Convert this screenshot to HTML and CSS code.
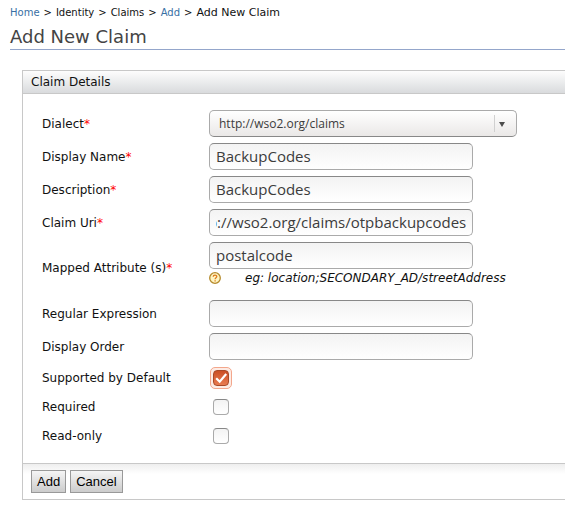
FILE: index.html
```html
<!DOCTYPE html>
<html lang="en">
<head>
<meta charset="utf-8">
<title>Add New Claim</title>
<link rel="stylesheet" href="styles.css">
</head>
<body>
<nav class="breadcrumb"><a href="#">Home</a><span>&gt;</span><span>Identity</span><span>&gt;</span><span>Claims</span><span>&gt;</span><a href="#">Add</a><span>&gt;</span><span class="current">Add New Claim</span></nav>
<h1 class="title">Add New Claim</h1>
<form class="panel">
  <h2 class="panel-head">Claim Details</h2>
  <div class="fields">
    <div class="row"><label for="dialect">Dialect<span class="req">*</span></label>
      <div class="select-wrap"><select id="dialect"><option>http://wso2.org/claims</option></select></div></div>
    <div class="row"><label for="name">Display Name<span class="req">*</span></label>
      <input class="text" type="text" id="name" value="BackupCodes"></div>
    <div class="row"><label for="desc">Description<span class="req">*</span></label>
      <input class="text" type="text" id="desc" value="BackupCodes"></div>
    <div class="row"><label for="uri">Claim Uri<span class="req">*</span></label>
      <input class="text" type="text" id="uri" value="http://wso2.org/claims/otpbackupcodes"></div>
    <div class="row"><label for="attr">Mapped Attribute (s)<span class="req">*</span></label>
      <div class="stack">
        <input class="text" type="text" id="attr" value="postalcode">
        <div class="hint">
          <svg class="help" viewBox="0 0 12 12" aria-hidden="true"><circle cx="6" cy="6" r="5.3" fill="#fff6c4" stroke="#b58a2c" stroke-width="1.3"/><path d="M4.2 4.8C4.2 2.6 7.8 2.6 7.8 4.6C7.8 5.8 6.1 5.8 6.1 7.3M6.1 8.2V9.5" fill="none" stroke="#df7b1c" stroke-width="1.3"/></svg>
          <em>eg: location;SECONDARY_AD/streetAddress</em>
        </div>
      </div></div>
    <div class="row"><label for="regex">Regular Expression</label>
      <input class="text" type="text" id="regex"></div>
    <div class="row"><label for="order">Display Order</label>
      <input class="text" type="text" id="order"></div>
    <div class="row check-row"><label for="supported">Supported by Default</label>
      <span class="check focused"><input type="checkbox" id="supported" checked><svg class="tick" viewBox="0 0 16 16" aria-hidden="true"><path d="M3.2 8.2L6.7 11.7L13.2 4" fill="none" stroke="#fff" stroke-width="2.2"/></svg></span></div>
    <div class="row check-row"><label for="required">Required</label>
      <span class="check"><input type="checkbox" id="required"></span></div>
    <div class="row check-row"><label for="readonly">Read-only</label>
      <span class="check"><input type="checkbox" id="readonly"></span></div>
  </div>
  <div class="actions"><button type="button">Add</button><button type="button">Cancel</button></div>
</form>
<script src="script.js"></script>
</body>
</html>
```
FILE: styles.css
```css
* { box-sizing: border-box; }

body {
  margin: 0;
  padding: 5px 0 12px 10px;
  background: #fff;
  color: #111;
  font: 12px/16px "DejaVu Sans", sans-serif;
}

.breadcrumb { display: flex; gap: 4px; font-size: 10px; line-height: 16px; }
.breadcrumb a { color: #386fa4; text-decoration: none; }
.current { font-size: 11px; }

.title {
  margin: 0 0 20px;
  padding: 4px 0 1px;
  border-bottom: 1px solid #94a6cb;
  color: #444;
  font-size: 18px;
  line-height: 23px;
  font-weight: normal;
}

.panel {
  margin-left: 12px;
  border: 1px solid #c8c8c8;
  border-right: 0;
}

.panel-head {
  margin: 0;
  padding: 0 8px;
  border-bottom: 1px solid #c8c8c8;
  background: linear-gradient(#fdfdfd, #d9dbdd);
  font-size: 12px;
  line-height: 22px;
  font-weight: normal;
}

.fields { padding: 13px 19px; }

.row {
  display: grid;
  grid-template-columns: 167px 1fr;
  align-items: center;
  min-height: 33px;
}
.check-row { min-height: 29px; }
.req { color: #f00; }

.text {
  display: block;
  width: 264px;
  height: 27px;
  padding: 0 6px 2px;
  border: 1px solid #aaa;
  border-top-color: #888;
  border-radius: 5px;
  background: linear-gradient(#f3f3f3, #fff);
  color: #3c3c3c;
  font: 15px "Open Sans", sans-serif;
}

.select-wrap { position: relative; width: 308px; }
.select-wrap select {
  appearance: none;
  display: block;
  width: 100%;
  height: 27px;
  padding: 0 32px 0 9px;
  border: 1px solid #aaa;
  border-bottom-color: #888;
  border-radius: 5px;
  background: linear-gradient(#fff, #eae8e7);
  color: #3c3c3c;
  font: 12px "Open Sans", sans-serif;
}
.select-wrap::before {
  content: "";
  position: absolute;
  right: 22px;
  top: 5px;
  height: 17px;
  border-left: 1px solid #d0d0d0;
}
.select-wrap::after {
  content: "";
  position: absolute;
  right: 12px;
  top: 12px;
  border: 3px solid transparent;
  border-top: 5px solid #4c4c4c;
  border-bottom: 0;
}

.stack { padding: 3px 0 11px; }
.hint { display: flex; align-items: center; gap: 24px; height: 17px; }
.help { width: 12px; height: 12px; }

.check {
  position: relative;
  display: block;
  width: 22px;
  height: 22px;
  margin-left: 1px;
  padding: 3px;
}
.check.focused {
  padding: 2px;
  border: 1px solid #f3a78c;
  border-radius: 5px;
  background: #fdebe4;
}
.check input {
  appearance: none;
  display: block;
  width: 16px;
  height: 16px;
  margin: 0;
  border: 1px solid #aaa;
  border-top-color: #888;
  border-radius: 4px;
  background: linear-gradient(#f3f3f3, #fff);
}
.check input:checked {
  border-color: #a84928;
  background: linear-gradient(#cb4f25, #e87b50);
}
.tick {
  position: absolute;
  inset: 2px;
  width: 16px;
  height: 16px;
  pointer-events: none;
}
.check input:not(:checked) + .tick { display: none; }

.actions {
  display: flex;
  gap: 4px;
  padding: 6px 8px;
  border-top: 1px solid #c8c8c8;
  background: linear-gradient(#eee, #fff 10px);
}
.actions button {
  height: 23px;
  padding: 0 5px;
  border: 1px solid #999;
  background: linear-gradient(#f5f5f5, #ccc);
  color: #000;
  font: 13px "Liberation Sans", sans-serif;
}
```
FILE: script.js
```js
// Keep the end of a long claim URI in view.
const uri = document.getElementById("uri");
uri.scrollLeft = uri.scrollWidth;
```
